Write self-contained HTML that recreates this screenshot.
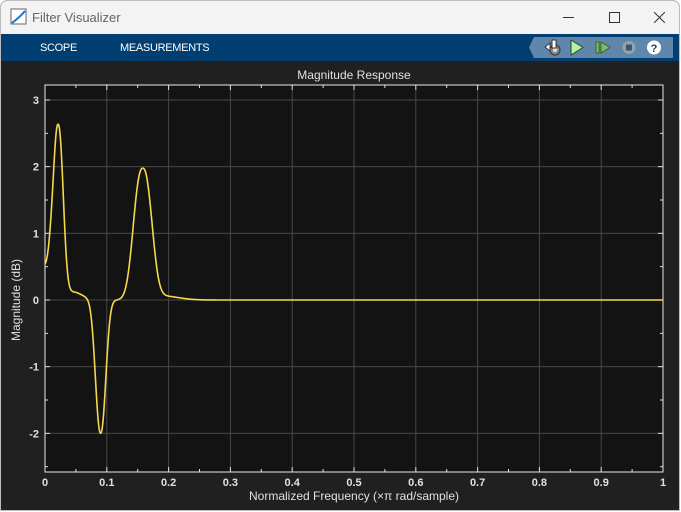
<!DOCTYPE html>
<html><head><meta charset="utf-8"><style>
body{margin:0;width:681px;height:512px;overflow:hidden;background:#fff;font-family:"Liberation Sans",sans-serif}
#win{position:absolute;left:0;top:0;width:680px;height:511px;background:#202020;border:1px solid #bdbdbd;border-radius:7px 7px 0 0;overflow:hidden;box-sizing:border-box}
#title{position:absolute;left:0;top:0;width:100%;height:33px;background:#f3f3f3}
#tb{position:absolute;left:0;top:33px;width:100%;height:27px;background:#013e72}
.t{position:absolute;color:#fff;font-size:11px;top:41px;letter-spacing:-0.3px}
</style></head><body>
<div id="win">
<div id="title">
<svg style="position:absolute;left:9px;top:7px" width="18" height="18"><rect x="1" y="1" width="15" height="15" fill="#fff" stroke="#666"/><path d="M2 15 C6 12 10 9 15 3" stroke="#1f6fc4" stroke-width="2" fill="none"/></svg>
<div style="position:absolute;left:31px;top:9px;font-size:13px;color:#666">Filter Visualizer</div>
<div style="position:absolute;left:562px;top:16px;width:11px;height:1px;background:#333"></div>
<div style="position:absolute;left:608px;top:11px;width:9px;height:9px;border:1px solid #333"></div>
<svg style="position:absolute;left:653px;top:11px" width="11" height="11"><path d="M0 0L11 11M11 0L0 11" stroke="#333"/></svg>
</div>
<div id="tb"></div>
<div class="t" style="left:39px">SCOPE</div>
<div class="t" style="left:119px">MEASUREMENTS</div>
<svg style="position:absolute;left:525px;top:36px" width="150" height="22">
<path d="M8 0H147V21H8L3 10.5Z" fill="#5f86ab"/>
<circle cx="29" cy="13" r="5" fill="#888" stroke="#333"/><circle cx="29" cy="13" r="2" fill="#ddd"/>
<path d="M19 10L24 6V14Z" fill="#fff" stroke="#333"/><rect x="26" y="3" width="4" height="8" fill="#fff" stroke="#333"/>
<path d="M45 3L57 10.5L45 18Z" fill="#b8f0a8" stroke="#2a4a20"/>
<rect x="70" y="5" width="3" height="11" fill="#7bbf5a" stroke="#2a4a20" stroke-width=".7"/>
<path d="M75 5L84 10.5L75 16Z" fill="#7bbf5a" stroke="#2a4a20" stroke-width=".7"/>
<circle cx="103" cy="10.5" r="7" fill="#8ea3b8" stroke="#6f8296"/><rect x="100" y="7.5" width="6" height="6" fill="#3d5570"/>
<circle cx="128" cy="10.5" r="7" fill="#fff"/><text x="128" y="15" font-size="11" font-weight="bold" text-anchor="middle" fill="#143f6e" font-family="Liberation Sans">?</text>
</svg>
<svg id="p" style="position:absolute;left:0;top:61px" width="681" height="450"></svg>
</div>
<script>
var s='',L=44,R=662,T=84-61,B=471-61;
function X(f){return L+f*(R-L)}function Y(d){return 299-61-d*66.67}
s+='<rect x="'+L+'" y="'+T+'" width="'+(R-L)+'" height="'+(B-T)+'" fill="#131313"/>';
for(var i=1;i<10;i++){var x=X(i/10);s+='<line x1="'+x+'" y1="'+T+'" x2="'+x+'" y2="'+B+'" stroke="#484848"/>';}
for(var d=-2;d<=3;d++){var y=Y(d);s+='<line x1="'+L+'" y1="'+y+'" x2="'+R+'" y2="'+y+'" stroke="#484848"/>';
s+='<text x="38" y="'+(y+4)+'" font-size="11" fill="#e0e0e0" text-anchor="end" font-weight="bold">'+d+'</text>';
s+='<line x1="'+L+'" y1="'+y+'" x2="'+(L+5)+'" y2="'+y+'" stroke="#ddd"/><line x1="'+R+'" y1="'+y+'" x2="'+(R-5)+'" y2="'+y+'" stroke="#ddd"/>';}
for(var d=-2.5;d<=3;d+=1){var y=Y(d);s+='<line x1="'+L+'" y1="'+y+'" x2="'+(L+3)+'" y2="'+y+'" stroke="#ddd"/><line x1="'+R+'" y1="'+y+'" x2="'+(R-3)+'" y2="'+y+'" stroke="#ddd"/>';}
for(var i=0;i<=20;i++){var x=X(i/20),l=i%2?3:5;s+='<line x1="'+x+'" y1="'+B+'" x2="'+x+'" y2="'+(B-l)+'" stroke="#ddd"/><line x1="'+x+'" y1="'+T+'" x2="'+x+'" y2="'+(T+l)+'" stroke="#ddd"/>';
if(i%2==0){var v=i/20;s+='<text x="'+x+'" y="'+(B+14)+'" font-size="11" fill="#e0e0e0" text-anchor="middle" font-weight="bold">'+(v==0?'0':v==1?'1':v.toFixed(1))+'</text>';}}
s+='<rect x="'+L+'" y="'+T+'" width="'+(R-L)+'" height="'+(B-T)+'" fill="none" stroke="#e8e8e8"/>';
s+='<text x="353" y="17" font-size="12" fill="#e0e0e0" text-anchor="middle">Magnitude Response</text>';
s+='<text x="353" y="438" font-size="12" fill="#e0e0e0" text-anchor="middle">Normalized Frequency (×π rad/sample)</text>';
s+='<text transform="translate(19,238) rotate(-90)" font-size="12" fill="#e0e0e0" text-anchor="middle">Magnitude (dB)</text>';
function g(f,c,w,p){return Math.exp(-0.693*Math.pow(Math.abs((f-c)/w),p))}
var pts=[];for(var k=0;k<=1500;k++){var f=k/1500;
var v=2.6*g(f,0.021,0.0095,2.3)+0.5*g(f,0,0.011,4)+0.12*g(f,0.045,0.018,2)-2*g(f,0.09,0.0095,2.2)+1.95*g(f,0.158,0.0165,2.4)+0.06*g(f,0.19,0.03,2);
pts.push(X(f).toFixed(2)+','+Y(v).toFixed(2));}
s+='<polyline points="'+pts.join(' ')+'" fill="none" stroke="#f5d94a" stroke-width="1.6"/>';
document.getElementById('p').innerHTML=s;
</script>
</body></html>
